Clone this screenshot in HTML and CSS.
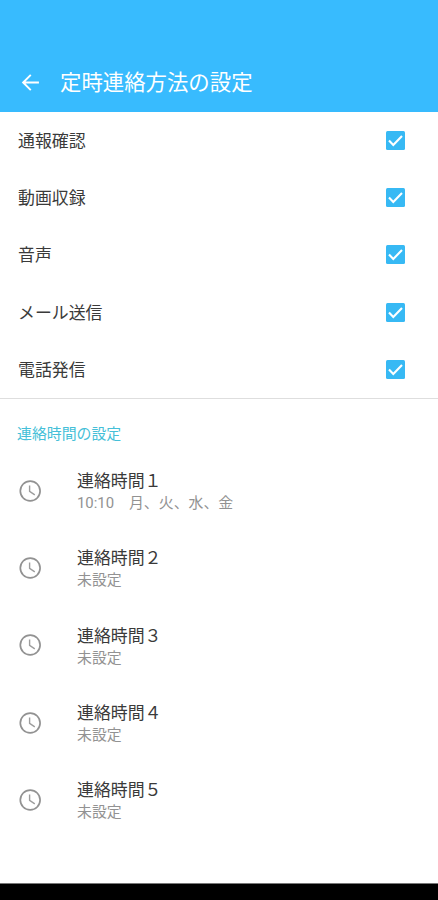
FILE: index.html
```html
<!DOCTYPE html>
<html lang="ja">
<head>
<meta charset="utf-8">
<title>定時連絡方法の設定</title>
<link rel="stylesheet" href="styles.css">
</head>
<body>
<svg class="defs" aria-hidden="true">
<symbol id="check" viewBox="0 0 19 19"><rect width="19" height="19" rx="1.5" fill="#37b9f4"/><path d="M3 9.5 7.3 14 16 5" fill="none" stroke="#fff" stroke-width="2.1"/></symbol>
<symbol id="clock" viewBox="0 0 24 24"><circle cx="12.2" cy="12" r="9.9" fill="none" stroke="#929292" stroke-width="1.7"/><path d="M11.6 6.6V12.3L16.8 15.8" fill="none" stroke="#9d9d9d" stroke-width="1.4"/></symbol>
</svg>
<div class="screen">
<header class="bar">
<svg class="back" viewBox="0 0 24 24"><path d="M20.8 12H4.5M12.3 4 4.3 12 12.3 20" fill="none" stroke="#fff" stroke-width="2"/></svg>
<h1>定時連絡方法の設定</h1>
</header>
<ul class="options">
<li><span>通報確認</span><svg><use href="#check"/></svg></li>
<li><span>動画収録</span><svg><use href="#check"/></svg></li>
<li><span>音声</span><svg><use href="#check"/></svg></li>
<li><span>メール送信</span><svg><use href="#check"/></svg></li>
<li><span>電話発信</span><svg><use href="#check"/></svg></li>
</ul>
<section class="times">
<h2>連絡時間の設定</h2>
<ul>
<li><svg><use href="#clock"/></svg><div><h3>連絡時間１</h3><p>10:10　月、火、水、金</p></div></li>
<li><svg><use href="#clock"/></svg><div><h3>連絡時間２</h3><p>未設定</p></div></li>
<li><svg><use href="#clock"/></svg><div><h3>連絡時間３</h3><p>未設定</p></div></li>
<li><svg><use href="#clock"/></svg><div><h3>連絡時間４</h3><p>未設定</p></div></li>
<li><svg><use href="#clock"/></svg><div><h3>連絡時間５</h3><p>未設定</p></div></li>
</ul>
</section>
<footer class="nav"></footer>
</div>
</body>
</html>
```
FILE: styles.css
```css
* { box-sizing: border-box; margin: 0; padding: 0; }
body { background: #fff; font-family: Roboto, "Noto Sans CJK JP", sans-serif; color: #3a3a3a; }
ul { list-style: none; }
h1, h2, h3 { font-weight: 400; }
.defs { position: absolute; width: 0; height: 0; }
.screen { height: 900px; display: flex; flex-direction: column; overflow: hidden; }
.bar { height: 112px; flex: none; background: #38bbfe; color: #fff; display: flex; align-items: center; padding: 53px 0 0 19px; }
.back { width: 23px; height: 23px; margin-right: 18px; }
.bar h1 { font-size: 21.4px; line-height: 30px; }
.options { height: 287px; flex: none; border-bottom: 1px solid #dedede; }
.options li { height: 57.2px; display: flex; align-items: center; justify-content: space-between; padding: 0 33px 0 18px; font-size: 16.9px; }
.options span { padding-bottom: 2px; }
.options svg { width: 19px; height: 19px; }
.times { flex: 1; padding-top: 24px; }
.times h2 { padding-left: 17px; color: #45bfd8; font-size: 14.9px; line-height: 22px; }
.times ul { padding-top: 7px; }
.times li { height: 77.3px; display: flex; align-items: center; padding-left: 18px; }
.times svg { width: 24px; height: 24px; margin-right: 35px; }
.times li div { padding-top: 3px; }
.times h3 { font-size: 16.9px; line-height: 22px; }
.times p { font-size: 14.9px; line-height: 22px; color: #929292; }
.nav { height: 17px; flex: none; background: #000; border-top: 1px solid #777; }
```
